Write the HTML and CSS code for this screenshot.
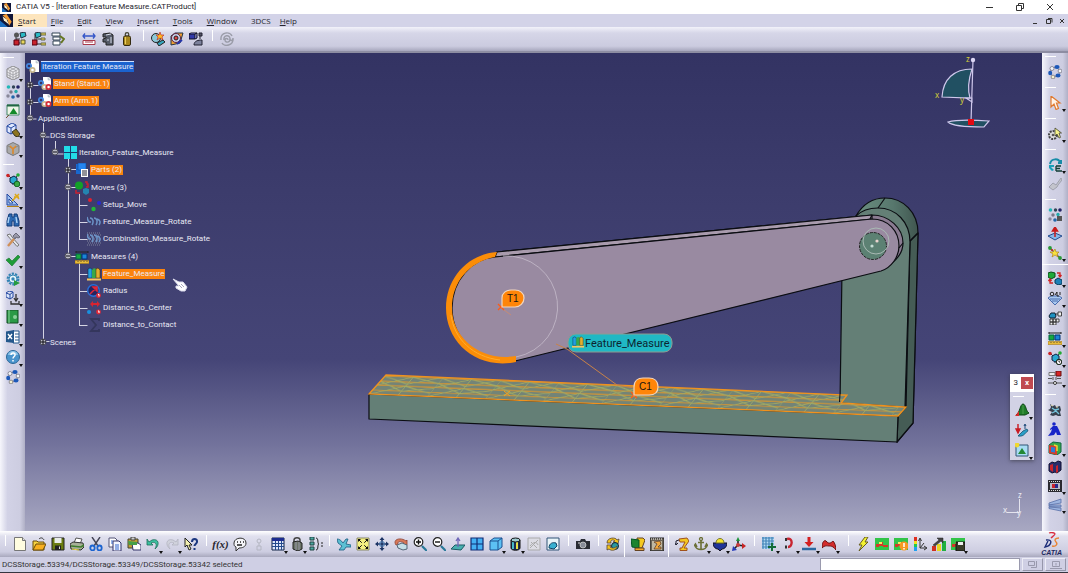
FILE: index.html
```html
<!DOCTYPE html>
<html lang="en">
<head>
<meta charset="utf-8">
<title>CATIA V5 - [Iteration Feature Measure.CATProduct]</title>
<link rel="stylesheet" href="styles.css">
</head>
<body>
<svg class="defs" aria-hidden="true">
<symbol id="app" viewBox="0 0 10 10"><rect width="10" height="10" fill="#10163a"/><path d="M0 10V5l6 5z" fill="#1c6fc0"/><path d="M2 1L5 0L9 6L7 9L6 5z" fill="#f39a32"/><path d="M2 2l3 2 2 4-4-3z" fill="#fff3c8"/></symbol>
<symbol id="cubes" viewBox="0 0 14 14"><path d="M3 4v7h4M3 7h4" fill="none" stroke="#333"/><path d="M7 1l5-1 1 4-5 2z" fill="#2bb9c4" stroke="#234"/><path d="M1 8h5v5H1z" fill="#c8232c" stroke="#501"/><path d="M8 8h4v4H8z" fill="#e8d65a" stroke="#553"/><circle cx="3.500" cy="3" r="2.500" fill="#555"/></symbol>
<symbol id="cubes2" viewBox="0 0 14 14"><path d="M3 2v10h6M4 7h5" fill="none" stroke="#333"/><path d="M3 1l5-1 1 4-5 2z" fill="#2bb9c4" stroke="#234"/><path d="M0 8h5v5H0z" fill="#c8232c" stroke="#501"/><path d="M9 1h5v2H9zM9 6h4v2H9zM9 11h5v2H9z" fill="#f0dc50" stroke="#664"/></symbol>
<symbol id="list" viewBox="0 0 14 14"><path d="M1 1h8v3H1zM2 5h7v3H2zM2 9h7v4H2z" fill="#fff" stroke="#345"/><path d="M9 4l4 3-3 4" fill="none" stroke="#667722" stroke-width="2"/></symbol>
<symbol id="ruler" viewBox="0 0 14 14"><path d="M1 4h12M3 1.500L1 4l2 2.500M11 1.500L13 4l-2 2.500" fill="none" stroke="#3355c8" stroke-width="1.300"/><path d="M1 8.500h12v4H1z" fill="#fff" stroke="#a83a4a"/><path d="M4 9v2M6 9v2M8 9v2M10 9v2" stroke="#a83a4a"/></symbol>
<symbol id="caliper" viewBox="0 0 14 14"><path d="M2 2l7-1 3 2v10l-7 0v-3H2l0-3 3-1V5L2 5z" fill="#555b68" stroke="#222"/><path d="M5 3l5-1M10 5v6M6 8h2" stroke="#d8dce8"/></symbol>
<symbol id="weight" viewBox="0 0 14 14"><circle cx="7" cy="2.500" r="1.800" fill="none" stroke="#443" stroke-width="1.200"/><rect x="3.500" y="4" width="7" height="9.500" rx="1.500" fill="#a8861c" stroke="#332a10"/><path d="M5.500 5v7" stroke="#e8cc60"/></symbol>
<symbol id="globe-star" viewBox="0 0 14 14"><circle cx="5" cy="6" r="4.500" fill="#8cc8d8" stroke="#222"/><path d="M9 0l1 3 3 0-2 2 1 3-3-2-3 2 1-3-2-2h3z" fill="#ffb81e" stroke="#b33" stroke-width=".7"/><path d="M6 11l6-3 2 2-6 4z" fill="#38a8c0" stroke="#222"/></symbol>
<symbol id="torus" viewBox="0 0 14 14"><path d="M1 13V4l4-3h8l-3 10z" fill="#f0a030" stroke="#234"/><circle cx="6" cy="6" r="4.500" fill="#c8d0e8" stroke="#602040"/><circle cx="6" cy="6" r="2" fill="#d44" stroke="#222"/><path d="M7 12l5-4" stroke="#23a" stroke-width="2"/></symbol>
<symbol id="boxes" viewBox="0 0 14 14"><path d="M0 2h6v5H0z" fill="#3038a8" stroke="#112"/><path d="M0 2l2-1h6l-2 1M6 7l2-1V1" fill="#7078e0" stroke="#112"/><path d="M11 4v3M8 9h2M10 1h3v3h-3z" stroke="#223" fill="#556"/><path d="M5 13c0-4 4-5 8-5v5z" fill="#7d829c" stroke="#223"/></symbol>
<symbol id="swirl" viewBox="0 0 14 14"><path d="M1 8C0 0 10-1 12 4M13 6c1 8-9 9-11 5M4 8c-1-5 6-6 6-1 0 4-5 4-5 1 0-2 3-2 3 0M10 7c1 3 3 1 3-1" fill="none" stroke="#9a9ca8" stroke-width="1.400"/></symbol>
<symbol id="mesh-cube" viewBox="0 0 14 14"><path d="M1 3l6-3 6 3v8l-6 3-6-3z" fill="#ececf0" stroke="#888"/><path d="M1 3l6 3 6-3M7 6v8M1 6l6 3 6-3M1 8.500l6 3 6-3M4 4.500v8M10 4.500v8M4 1.500l6 3M10 1.500l-6 3" fill="none" stroke="#9a9aa0" stroke-width=".8"/></symbol>
<symbol id="dots" viewBox="0 0 14 14"><circle cx="2.500" cy="2" r="1.800" fill="#22b8b8"/><circle cx="7.500" cy="2" r="1.700" fill="#345"/><circle cx="12" cy="2" r="1.800" fill="#226"/><circle cx="5" cy="7" r="1.700" fill="#778"/><circle cx="10" cy="6.500" r="1.700" fill="#2aa"/><circle cx="2" cy="11" r="1.700" fill="#889"/><circle cx="7" cy="12" r="1.800" fill="#26a"/><circle cx="12" cy="11" r="1.800" fill="#447"/></symbol>
<symbol id="dots-sq" viewBox="0 0 14 14"><use href="#dots"/><path d="M9 8h5v5H9z" fill="#555"/></symbol>
<symbol id="tri-win" viewBox="0 0 14 14"><path d="M1 1h12v10H1z" fill="#eef4e8" stroke="#486"/><path d="M1 1.500h12" stroke="#264" stroke-width="2"/><path d="M3.500 10L7.500 4l4 6z" fill="#128a28"/><path d="M0 14l3-3" stroke="#753"/></symbol>
<symbol id="cube-tool" viewBox="0 0 14 14"><path d="M1 3l5-3 4 2v6l-5 3-4-2z" fill="#dfe8ff" stroke="#2448a0"/><path d="M1 3l4 2 5-3M5 5v6" fill="none" stroke="#2448a0"/><path d="M6 9l4-3 4 5-2 3-3-1z" fill="#8c7420" stroke="#332"/></symbol>
<symbol id="cube-grey" viewBox="0 0 14 14"><path d="M1 3.500l6-3 6 3v7l-6 3-6-3z" fill="#aaa" stroke="#777"/><path d="M1 3.500l6 3 6-3M7 6.500v7" fill="none" stroke="#888"/><path d="M7 12V7L4 4M7 7l3-3" stroke="#e48a28" stroke-width="1.500" fill="none"/></symbol>
<symbol id="molecule" viewBox="0 0 14 14"><path d="M2 2l5 5 5-5M7 7v5" stroke="#345" fill="none"/><circle cx="2" cy="2.500" r="1.800" fill="#c22"/><circle cx="12" cy="2" r="1.800" fill="#2a3"/><path d="M4 5l4-2 3 2v4L7 11 4 9z" fill="#2aa8d0" stroke="#124"/><circle cx="11" cy="11" r="2.800" fill="#3aaa46" stroke="#162"/></symbol>
<symbol id="mol-clock" viewBox="0 0 14 14"><use href="#molecule"/><circle cx="11" cy="11" r="2.600" fill="#fff" stroke="#222"/><path d="M11 9.500V11h1" stroke="#222" fill="none"/></symbol>
<symbol id="draft" viewBox="0 0 14 14"><path d="M1 1v11h11z" fill="#9cc0f0" stroke="#2448a0"/><path d="M3 6v4h4z" fill="#fff" stroke="#2448a0"/><path d="M6 8l7-7M9 1l4 5M8 4h5" stroke="#dca81c" stroke-width="1.500"/><path d="M1 13.500h12" stroke="#b08018"/></symbol>
<symbol id="binoc" viewBox="0 0 14 14"><path d="M3 1h3v3h2V1h3l2 7v5H8V8H6v5H1V8z" fill="#2c68b0" stroke="#123c78"/><path d="M3 4L2 10M10 4l1 6" stroke="#a8d0f4" stroke-width="1.500"/></symbol>
<symbol id="tools" viewBox="0 0 14 14"><path d="M1 2l3-1 2 3 7 8-2 1.500-7-8z" fill="#e4e6ec" stroke="#777"/><path d="M2 13l6-7" stroke="#d09058" stroke-width="2.400"/><path d="M7 3l3-3 4 4-2 1-2-1-1 2z" fill="#99a" stroke="#667"/></symbol>
<symbol id="check" viewBox="0 0 14 14"><path d="M0 7l3-2 3 3 6-6 2 2-8 9z" fill="#1f9c38" stroke="#157228" stroke-width=".6"/></symbol>
<symbol id="gear" viewBox="0 0 14 14"><circle cx="7" cy="7" r="5.300" fill="none" stroke="#3484b4" stroke-width="2.200" stroke-dasharray="2.200 1.100"/><circle cx="7" cy="7" r="4" fill="#e5f4fa" stroke="#3484b4"/><circle cx="7" cy="7" r="1.700" fill="#3484b4"/><path d="M8 8l6 3-6 3z" fill="#279c40"/></symbol>
<symbol id="cube-down" viewBox="0 0 14 14"><path d="M0 2l3-2 4 1v5L4 8 0 6zM0 2l4 1.500L7 1M4 3.500V8" fill="#dbe6fa" stroke="#2448a0"/><path d="M10 3v6M8 7l2 3 2-3M5 10v3h8v-3" fill="none" stroke="#333" stroke-width="1.300"/></symbol>
<symbol id="book" viewBox="0 0 14 14"><path d="M1 0h11v13H1z" fill="#2a9a46" stroke="#124c22"/><path d="M3 0v13" stroke="#8ad09a"/><circle cx="9" cy="7" r="2" fill="#8ad09a"/></symbol>
<symbol id="excel" viewBox="0 0 14 14"><path d="M7 1h6v12H7z" fill="#fff" stroke="#24588c"/><path d="M9 4h4M9 7h4M9 10h4" stroke="#24588c"/><path d="M0 1.500L8 0v13L0 12z" fill="#24588c"/><path d="M2 4l4 5M6 4L2 9" stroke="#fff" stroke-width="1.400"/></symbol>
<symbol id="help" viewBox="0 0 14 14"><circle cx="7" cy="7" r="6.500" fill="#4a94cc" stroke="#2c6898"/><path d="M2 5a5 4 0 0 1 10 0z" fill="#8cc4e8"/><path d="M5 5c0-3 4.500-2.500 4 0C9 6.500 7 6.500 7 8.500M7 10v1.500" fill="none" stroke="#fff" stroke-width="1.500"/></symbol>
<symbol id="ring" viewBox="0 0 14 14"><circle cx="7" cy="7" r="4.500" fill="none" stroke="#889"/><ellipse cx="9" cy="2" rx="2.600" ry="1.900" fill="#1c58b8"/><circle cx="4" cy="3.500" r="2" fill="#f4f6fa" stroke="#556" stroke-width=".6"/><ellipse cx="2.200" cy="8" rx="2" ry="2.300" fill="#1c58b8"/><circle cx="5" cy="12" r="1.900" fill="#f4f0d0" stroke="#556" stroke-width=".6"/><ellipse cx="10" cy="10.500" rx="2.500" ry="2" fill="#1c58b8"/><circle cx="12" cy="6" r="1.900" fill="#f4f6fa" stroke="#556" stroke-width=".6"/></symbol>
<symbol id="arrow" viewBox="0 0 14 14"><path d="M3 0v11l3-3 2 5.500 2.500-1L8.500 7H12z" fill="#fff4e8" stroke="#e07a30" stroke-width="1.200"/></symbol>
<symbol id="gear-arrow" viewBox="0 0 14 14"><circle cx="5" cy="8" r="4" fill="#ddd" stroke="#444" stroke-width="2" stroke-dasharray="2 1"/><circle cx="5" cy="8" r="1.300" fill="#555"/><path d="M7 1v8l2-2 2 4 1.500-.6L11 6h2.500z" fill="#f6f48a" stroke="#443" stroke-width=".8"/></symbol>
<symbol id="cycle" viewBox="0 0 14 14"><path d="M2 6c1-6 9-6 10-1M10 5h3V2" fill="none" stroke="#178ca8" stroke-width="2"/><path d="M1 7h5v2H3l3 3-2 1-3-3z" fill="#1aa0b8"/><path d="M8 8h5M8 10.500h4M8 13h6M8 8v5" stroke="#123c34" stroke-width="1.300"/></symbol>
<symbol id="brush" viewBox="0 0 14 14"><path d="M13 1L8 8 5 6 1 10l4 3 4-3 1-2 4-5z" fill="#c3c4cc" stroke="#9fa1ad"/></symbol>
<symbol id="plane-up" viewBox="0 0 14 14"><path d="M0 9l7-3 7 3-7 4z" fill="#88b8e8" stroke="#234c90"/><path d="M7 10V3M4.500 4L7 0l2.500 4z" stroke="#c81c1c" stroke-width="1.500" fill="#c81c1c"/></symbol>
<symbol id="spark-line" viewBox="0 0 14 14"><path d="M1 1l12 12" stroke="#654" stroke-width="1.200"/><path d="M7 3l1 3 3 0-2 2 1 3-3-2-3 2 1-3-3-2h3z" fill="#f8e040" stroke="#a87c10" stroke-width=".6"/><circle cx="2" cy="2" r="1.900" fill="#2a9a38"/><circle cx="12" cy="12" r="1.900" fill="#2a9a38"/><circle cx="4" cy="4" r="1" fill="#c22"/></symbol>
<symbol id="swap" viewBox="0 0 14 14"><path d="M0 2l3-1 4 1v4L3 8 0 6z" fill="#1fa838" stroke="#0a4c18"/><path d="M7 9l3-2 4 2v4l-4 1-3-2z" fill="#1c80b8" stroke="#083858"/><path d="M9 2h3v3M10.500 4L12 6l1.500-2M5 12H2V9M.5 10L2 8l1.500 2" fill="none" stroke="#d02424" stroke-width="1.300"/></symbol>
<symbol id="balloon" viewBox="0 0 14 14"><path d="M0 7l3-2h8l3 2-7 7z" fill="#a8c8f0" stroke="#4a6cae"/><path d="M2 8h10M4 10h6" stroke="#4a6cae"/><circle cx="4" cy="3" r="1.800" fill="none" stroke="#222"/><path d="M7 4l2-3v4h2M12 1v3" fill="none" stroke="#222"/></symbol>
<symbol id="network" viewBox="0 0 14 14"><path d="M1 5l2-3h4l1 3-1 2H2z" fill="#1d90c0" stroke="#123"/><path d="M10 1h3.500v4H10zM2 8h3v3H2zM5 8h3v3H5zM8 8h3v3H8zM2 11h3v3H2zM5 11h3v3H5z" fill="#eee" stroke="#333" stroke-width=".9"/><path d="M8 3h2" stroke="#333"/></symbol>
<symbol id="measure" viewBox="0 0 14 14"><path d="M1 1v2M13 1v2M1 2h12" fill="none" stroke="#222"/><path d="M1 4h5v5H1z" fill="#18a840" stroke="#064"/><path d="M7 4h5v5H7z" fill="#1c84d8" stroke="#037"/><path d="M0 10.500h14v3H0z" fill="#e8bc38" stroke="#a87a18" stroke-width=".6"/><path d="M3 11v1M6 11v1M9 11v1M12 11v1" stroke="#653"/></symbol>
<symbol id="toler" viewBox="0 0 14 14"><path d="M1 1.500h6v3H1z" fill="#eee" stroke="#777"/><path d="M8 0h5v5H8z" fill="#d82424" stroke="#611"/><path d="M0 7.500h4M9 7.500h4M5 6v3M8 6v3M0 12h14" fill="none" stroke="#555"/><circle cx="7" cy="12" r="1.500" fill="#fff" stroke="#333"/></symbol>
<symbol id="robots" viewBox="0 0 14 14"><path d="M2 1l3 2 2-1 1 2 4-1 1 4-1 2 1 4-3 0-2-1-3 1-3-1 2-3-4-2 2-1 1-2z" fill="#39424f"/><path d="M4 5l3 2 4-1M4 10l4-2 3 3" stroke="#75c4dc" fill="none" stroke-width="1.300"/><path d="M3 2l2 1M8 4l2 0" stroke="#e8e0b0"/></symbol>
<symbol id="person" viewBox="0 0 14 14"><circle cx="6" cy="2" r="1.800" fill="#1724c8"/><path d="M5 4l4 0 2 4 2 5h-4L8 10l-2 3-6 1 3-4 1-3-2 1V7z" fill="#1724c8"/></symbol>
<symbol id="rgb-cube" viewBox="0 0 14 14"><path d="M1 4l4-3 8 1v9l-4 3-8-2z" fill="#36a848" stroke="#164"/><path d="M1 4l8 1v9l-8-2z" fill="#d83c2c"/><path d="M3 6l4 .5v5L3 11z" fill="#2c7cd8"/><path d="M6 4l3 1v5" stroke="#f0d838" fill="none" stroke-width="1.500"/></symbol>
<symbol id="blk-cube" viewBox="0 0 14 14"><path d="M1 4l3-2 3 1 3-2 3 1v8l-4 3-2-1-3 1-3-2z" fill="#282c6c" stroke="#113"/><path d="M2 5l3-1v8l-3-2zM8 6l2-1v7l-2 1z" fill="#c8242c"/></symbol>
<symbol id="film" viewBox="0 0 14 14"><path d="M0 1h14v12H0z" fill="#2a2a30"/><path d="M1 2.500h12M1 11.500h12" stroke="#ddd" stroke-dasharray="1 1"/><path d="M2 4h10v6H2z" fill="#b9bcc8"/><path d="M4 5h3v4H4z" fill="#c8242c"/><path d="M7 5h3v4H7z" fill="#282c8c"/></symbol>
<symbol id="sheets" viewBox="0 0 14 14"><path d="M1 5l12-4v4L1 7zM1 7h12v2L1 8.500zM1 9l12 1v3L1 10.500z" fill="#9cb4e0" stroke="#5870a8" stroke-width=".8"/></symbol>
<symbol id="bell" viewBox="0 0 14 14"><path d="M1 12C5 10 5 1 8 1s3 8 6 9l-4 2z" fill="#1f7c28" stroke="#0c4414"/><path d="M0 13l4-5v5z" fill="#d42c2c"/><path d="M8 2v9" stroke="#4c9c4c"/></symbol>
<symbol id="redarrow" viewBox="0 0 14 14"><path d="M3 1v6M1 6l2 4 2-4z" stroke="#c81c24" stroke-width="1.400" fill="#c81c24"/><path d="M3 13c7 1 7-4 10-5l-1-2-4 2-3 3z" fill="#2ba0c8" stroke="#145070" stroke-width=".8"/><path d="M10 6V2M9 3l1-2 1 2" stroke="#1c4878" fill="none"/></symbol>
<symbol id="pic" viewBox="0 0 14 14"><path d="M1 2h12v11H1z" fill="#a8dcf4" stroke="#357"/><path d="M3 11l4-6 4 6z" fill="#238834"/><circle cx="2" cy="2" r="2.400" fill="#f0d830"/></symbol>
<symbol id="new" viewBox="0 0 14 14"><path d="M1.500.5h8l3 3v10h-11z" fill="#fffde0" stroke="#777"/><path d="M9.500.5v3h3" fill="#ddd" stroke="#777"/></symbol>
<symbol id="open" viewBox="0 0 14 14"><path d="M1 4h4l1 1h6v8H1z" fill="#f8d444" stroke="#6a4c08"/><path d="M1 13l3-6h10l-3 6z" fill="#f8b020" stroke="#6a4c08"/><path d="M7 2c2-2 4-1 5 1" fill="none" stroke="#333"/></symbol>
<symbol id="save" viewBox="0 0 14 14"><path d="M1 1h12v12H1z" fill="#6a7c10" stroke="#222"/><path d="M3.500 1h7v5h-7z" fill="#e8ece8"/><path d="M4 8.500h6V13H4z" fill="#222"/><path d="M8 9.500h1V12H8z" fill="#ddd"/></symbol>
<symbol id="print" viewBox="0 0 14 14"><path d="M4 6l2-5 6 1-2 5z" fill="#fff" stroke="#555"/><path d="M0 7l3-2 10 1 1 4-3 3-10-1z" fill="#a8b098" stroke="#333"/><path d="M1 9l10 1 3-2" fill="none" stroke="#3c7c2c" stroke-width="1.600"/><path d="M2 12l7 1" stroke="#e8d840"/></symbol>
<symbol id="cut" viewBox="0 0 14 14"><path d="M3 0l6 9M11 0L5 9" stroke="#445" stroke-width="1.400"/><ellipse cx="3.500" cy="11" rx="2.200" ry="2.500" fill="none" stroke="#1c64d0" stroke-width="1.800"/><ellipse cx="10.500" cy="11" rx="2.200" ry="2.500" fill="none" stroke="#1c64d0" stroke-width="1.800"/></symbol>
<symbol id="copy" viewBox="0 0 14 14"><path d="M1 1h6l2 2v7H1z" fill="#fff" stroke="#557"/><path d="M5 4h6l2 2v8H5z" fill="#f4f6ff" stroke="#336"/><path d="M3 4h2M3 6h2M7 8h4M7 10h4M7 12h4" stroke="#36c"/></symbol>
<symbol id="paste" viewBox="0 0 14 14"><path d="M1 2h10v9H1z" fill="#c09c34" stroke="#443"/><path d="M4 0h4v3H4z" fill="#ccc" stroke="#444"/><path d="M5 6h6l3 2v5H6z" fill="#fff" stroke="#336"/><path d="M1 4l9 1v3H2z" fill="#48a048"/></symbol>
<symbol id="undo" viewBox="0 0 14 14"><path d="M1 2v6h6L5 6c4-2 7 1 4 6 5-4 4-11-3-9L3 5z" fill="#3cc0a0" stroke="#1c6c58" stroke-width=".8"/></symbol>
<symbol id="redo" viewBox="0 0 14 14"><path d="M13 2v6H7l2-2c-4-2-7 1-4 6C0 8 1 1 8 3l3 2z" fill="#d0d2dc" stroke="#b2b4c0" stroke-width=".8"/></symbol>
<symbol id="whatsthis" viewBox="0 0 14 14"><path d="M1 1v9l2-2 2 5 2-1-2-4h3z" fill="#f4f0b0" stroke="#222"/><path d="M8 5c0-4 5.500-4 5 0-.5 2-2.500 2-2.500 4M10.500 11v2" fill="none" stroke="#1c3880" stroke-width="2"/></symbol>
<symbol id="bubble" viewBox="0 0 14 14"><path d="M1 6c0-6 12-7 12 0 0 4-4 5-7 5l-3 3v-4C1 9 1 8 1 6z" fill="#f4f4f8" stroke="#333"/><path d="M4 5h1M7 5h1M10 5h1M4 8h5" stroke="#222" stroke-width="1.500"/></symbol>
<symbol id="ghost" viewBox="0 0 14 14"><circle cx="7" cy="4" r="2" fill="none" stroke="#b4b6c2"/><path d="M7 6v3M5 9h4v4H5z" fill="none" stroke="#b4b6c2"/></symbol>
<symbol id="table" viewBox="0 0 14 14"><path d="M1 1h12v12H1z" fill="#dfe6fb" stroke="#124"/><path d="M1 2.500h12" stroke="#1c2c90" stroke-width="3"/><path d="M1 6.500h12M1 9.500h12M4.500 4v9M7.500 4v9M10.500 4v9" stroke="#234a8c"/></symbol>
<symbol id="lock" viewBox="0 0 14 14"><path d="M4 6V3c0-3 6-3 6 0v3" fill="none" stroke="#444" stroke-width="1.500"/><path d="M3 5l5-1 4 2v6l-4 2-5-2z" fill="#6c7468" stroke="#222"/><path d="M6 5v8M9 5v8" stroke="#99a"/></symbol>
<symbol id="tree" viewBox="0 0 14 14"><path d="M1 0h4v3H1zM1 5h4v3H1zM1 10h4v3H1z" fill="#4aa8a0" stroke="#244"/><path d="M7 1c3 0 1 6 3 6-2 0 0 6-3 6M12 6h2M12 9h2" fill="none" stroke="#222"/></symbol>
<symbol id="fly" viewBox="0 0 14 14"><path d="M0 2c2 0 4 1 6 4l3-4 2 0-2 5 5 1 0 2-5 0-2 3-5 0 3-4-4-3z" fill="#5cc0d4" stroke="#185c80" stroke-width=".8"/></symbol>
<symbol id="fit" viewBox="0 0 14 14"><path d="M1 1h12v12H1z" fill="#f4f080" stroke="#886"/><path d="M3 3l8 8M11 3l-8 8" stroke="#111"/><path d="M2 5V2h3zM9 2h3v3zM2 9v3h3zM9 12h3V9z" fill="#111"/><path d="M5.500 5.500h3v3h-3z" fill="#f4f080"/></symbol>
<symbol id="pan" viewBox="0 0 14 14"><path d="M7 2v10M2 7h10" stroke="#1c3464" stroke-width="1.600"/><path d="M4.500 3L7 0l2.500 3zM4.500 11L7 14l2.500-3zM3 4.500L0 7l3 2.500zM11 4.500L14 7l-3 2.500z" fill="#1c3464"/><path d="M5 5h4v4H5z" fill="none" stroke="#4478b0"/></symbol>
<symbol id="rotate" viewBox="0 0 14 14"><path d="M2 8C-2 2 7 0 12 4l1-1v5H8l2-2C7 4 3 4 4 7z" fill="#d87858" stroke="#8c3c2c" stroke-width=".8"/><path d="M3 8l5-2 5 2v4l-4 1-5-2z" fill="#c4dfe8" stroke="#567"/></symbol>
<symbol id="zin" viewBox="0 0 14 14"><path d="M9 9l5 5" stroke="#287898" stroke-width="2.200"/><circle cx="5.500" cy="5" r="4.300" fill="#fff" stroke="#222" stroke-width="1.200"/><path d="M3 5h5M5.500 2.500v5" stroke="#111" stroke-width="1.400"/></symbol>
<symbol id="zout" viewBox="0 0 14 14"><path d="M9 9l5 5" stroke="#287898" stroke-width="2.200"/><circle cx="5.500" cy="5" r="4.300" fill="#fff" stroke="#222" stroke-width="1.200"/><path d="M3 5h5" stroke="#111" stroke-width="1.400"/></symbol>
<symbol id="normal" viewBox="0 0 14 14"><path d="M0 12l4-4h10l-4 5z" fill="#48b0b0" stroke="#1c5c64"/><path d="M7 10V1M5 4l2-3 2 3" fill="none" stroke="#7068b8" stroke-width="1.300"/></symbol>
<symbol id="views" viewBox="0 0 14 14"><path d="M1 1h12v12H1z" fill="#44b0f4" stroke="#102c74" stroke-width="1.200"/><path d="M7 1v12M1 7h12" stroke="#102c74" stroke-width="1.200"/></symbol>
<symbol id="iso" viewBox="0 0 14 14"><path d="M1 4l4-3h8v9l-4 3H1z" fill="#5cc0f4" stroke="#1c5090"/><path d="M1 4h8v9M9 4l4-3" fill="none" stroke="#1c5090"/></symbol>
<symbol id="cyl" viewBox="0 0 14 14"><path d="M3 3v8c0 3 9 3 9 0V3" fill="#1c2c50" stroke="#111"/><path d="M4 4v8h2V4z" fill="#48b8c8"/><path d="M8 4v8h2V4z" fill="#e8e048"/><ellipse cx="7.500" cy="3" rx="4.500" ry="2" fill="#9ccad0" stroke="#111"/></symbol>
<symbol id="hide" viewBox="0 0 14 14"><path d="M1 1h12v12H1z" fill="#dcdce4" stroke="#aaa"/><path d="M3 9c4-5 7-4 8-1M3 11l8-8M4 5l6 6" fill="none" stroke="#aaa"/></symbol>
<symbol id="swapvis" viewBox="0 0 14 14"><path d="M1 1h12v12H1z" fill="#e8f4f8" stroke="#357"/><path d="M3 11c0-5 4-6 7-5l1 3-3 3z" fill="#38b0d0" stroke="#146"/></symbol>
<symbol id="camera" viewBox="0 0 14 14"><path d="M0 4h4l1-2h4l1 2h4v8H0z" fill="#2a2c34"/><circle cx="7" cy="8" r="3" fill="#888c98" stroke="#ddd" stroke-width=".7"/><path d="M2 6h2" stroke="#ddd"/></symbol>
<symbol id="cycle2" viewBox="0 0 14 14"><path d="M1 6c0-6 9-6 10-3l2-1-1 5-5-2 2-1C7 2 4 3 5 6z" fill="#f4c41c" stroke="#543" stroke-width=".8"/><circle cx="9" cy="9" r="3.500" fill="#2a98a0" stroke="#123"/><path d="M1 8l4 0-1 2c3 2 5 1 7-1 0 5-6 5-8 3l-2 1z" fill="#f4c41c" stroke="#543" stroke-width=".8"/></symbol>
<symbol id="robot" viewBox="0 0 14 14"><path d="M6 1h6l2 2-3 8H7z" fill="#f4c820" stroke="#642"/><path d="M0 2l8 1v8l-7-1z" fill="#1c8430" stroke="#052"/><path d="M4 11h9v2.500H4z" fill="#f4a828" stroke="#642"/></symbol>
<symbol id="robotfilm" viewBox="0 0 14 14"><path d="M0 1h14v13H0z" fill="#6b6458" stroke="#222"/><path d="M1 2h12" stroke="#fff" stroke-dasharray="1 1"/><path d="M2 4h10v9H2z" fill="#c0b8a0"/><path d="M4 5l6-1 1 3-3 3h3v2H4l3-5z" fill="#f0a83c" stroke="#532" stroke-width=".7"/></symbol>
<symbol id="arm" viewBox="0 0 14 14"><path d="M4 2l8-1 2 3-5 7 3 0 0 2.500H5V11l2 0 3-6-5 0z" fill="#f4c820" stroke="#a0521c"/><path d="M1 4v4M0 6l1 2 2-2M1 4l3-1" fill="none" stroke="#223"/></symbol>
<symbol id="anchor" viewBox="0 0 14 14"><circle cx="7" cy="2" r="1.500" fill="none" stroke="#6c7038" stroke-width="1.300"/><path d="M7 3.500V12M4 5.500h6M1 8c0 6 12 6 12 0M0 9l1.500-2L3 10M14 9l-1.500-2L11 10" fill="none" stroke="#6c7038" stroke-width="1.600"/></symbol>
<symbol id="pot" viewBox="0 0 14 14"><path d="M0 6h14c0 3-2 6-5 6l-2 2-2-2C2 12 0 9 0 6z" fill="#203498" stroke="#112"/><path d="M3 6c0-6 8-6 8 0z" fill="#f4e428" stroke="#773"/></symbol>
<symbol id="axes" viewBox="0 0 14 14"><path d="M6 8V2M6 8l6 1M6 8l-4 4" stroke="#222" stroke-width="1.600"/><path d="M4 4l2-4 2 4z" fill="#1c9438"/><path d="M10 6l4 3-4 3z" fill="#c82424"/><path d="M0 14l1-5 4 4z" fill="#2438b8"/><circle cx="6" cy="8" r="2" fill="#c83c3c"/></symbol>
<symbol id="grid" viewBox="0 0 14 14"><path d="M0 0h12v12H0z" fill="#b4dcf4"/><path d="M1 0v12M4 0v12M7 0v12M10 0v12M0 1h12M0 4h12M0 7h12M0 10h12" stroke="#4484b8" stroke-width="1.200"/><path d="M10 6v8M6 10h8" stroke="#146c38" stroke-width="2"/></symbol>
<symbol id="magnet" viewBox="0 0 14 14"><path d="M5 2c6-2 6 8 1 8" fill="none" stroke="#c82430" stroke-width="2.400"/><path d="M4 1v3M4 8.500v3" stroke="#333" stroke-width="2"/></symbol>
<symbol id="down" viewBox="0 0 14 14"><path d="M7 0v6" stroke="#d42020" stroke-width="3"/><path d="M2.500 5h9L7 10z" fill="#d42020"/><path d="M0 12h14" stroke="#2c68a0" stroke-width="2.500"/></symbol>
<symbol id="wave" viewBox="0 0 14 14"><path d="M0 11c0-7 3-9 5-6 2 2 4 1 6-1 2 2 3 6 3 9-3-4-5-4-7-4s-4-1-7 2z" fill="#d42c2c" stroke="#6c1010"/></symbol>
<symbol id="bolt" viewBox="0 0 14 14"><path d="M9 0h3L9 5h3L3 14l3-6H3z" fill="#f4f430" stroke="#665c20"/></symbol>
<symbol id="map" viewBox="0 0 14 14"><path d="M0 1h14v12H0z" fill="#32c448"/><path d="M1 7h3V5h4v3h5v2H8V9H4v1H1z" fill="#d43828"/><path d="M4 5h3v2H4z" fill="#f4e860"/></symbol>
<symbol id="mapwarn" viewBox="0 0 14 14"><use href="#map"/><circle cx="10" cy="9" r="4.500" fill="#f89820"/><path d="M10 6v4M10 11v1.500" stroke="#fff" stroke-width="1.500"/></symbol>
<symbol id="scale" viewBox="0 0 14 14"><path d="M1 0h3v4H1z" fill="#e03020"/><path d="M1 4h3v3H1z" fill="#f4e020"/><path d="M1 7h3v3H1z" fill="#20c850"/><path d="M1 10h3v4H1z" fill="#20a0f0"/><path d="M7 2v9h6M5.500 4L7 1l1.500 3M11 9l3 2-3 2M7 11l4-5" fill="none" stroke="#333"/></symbol>
<symbol id="chart" viewBox="0 0 14 14"><path d="M0 9h4v5H0z" fill="#d03020"/><path d="M5 7h4v7H5z" fill="#e8d820"/><path d="M10 4h4v10h-4z" fill="#20b040"/><path d="M1 8l6-5-2-2h6v5L9 4 3 9z" fill="#444" stroke="#222" stroke-width=".5"/></symbol>
<symbol id="mapsave" viewBox="0 0 14 14"><use href="#map"/><path d="M5 5h9v9H5z" fill="#383c28" stroke="#111"/><path d="M7 5h5v3H7z" fill="#eee"/></symbol>
<symbol id="product" viewBox="0 0 14 14"><path d="M5 0h6l2 2v10H5z" fill="#fff"/><path d="M10 0v3h3" fill="#cdd" stroke="#aab" stroke-width=".5"/><circle cx="3" cy="6" r="2.200" fill="none" stroke="#4488e0" stroke-width="1.700"/><circle cx="6.500" cy="10" r="2.200" fill="none" stroke="#c8b890" stroke-width="1.700"/></symbol>
<symbol id="part" viewBox="0 0 14 14"><use href="#product"/><circle cx="10.500" cy="10" r="2.200" fill="none" stroke="#d42c38" stroke-width="1.700"/></symbol>
<symbol id="model" viewBox="0 0 14 14"><path d="M1 0h13v13H1z" fill="#22dce8"/><path d="M7.500 0v13M1 6.500h13" stroke="#183c70"/></symbol>
<symbol id="parts" viewBox="0 0 14 14"><path d="M1 1h8v10H1z" fill="#1868d0"/><path d="M3 0h8v7H3z" fill="#2484f0" stroke="#124c98" stroke-width=".6"/><path d="M6 6h7v8H6z" fill="#fff"/><path d="M7 8h5M7 10h5M7 12h5" stroke="#223"/></symbol>
<symbol id="moves" viewBox="0 0 14 14"><circle cx="4" cy="4.500" r="4" fill="#12a028"/><path d="M10 1h2v2h1v3h-2M1 9v3h4" stroke="#c82030" fill="none" stroke-width="1.500"/><path d="M8 8l3-1 3 1v4l-3 2-3-2z" fill="#2484b0"/></symbol>
<symbol id="setup" viewBox="0 0 14 14"><circle cx="3" cy="2" r="2" fill="#e02030"/><circle cx="12" cy="5" r="2" fill="#2828d8"/><circle cx="6.500" cy="11" r="2.200" fill="#20b838"/></symbol>
<symbol id="coil" viewBox="0 0 14 14"><path d="M0 2c1 5 2 5 4 5M3 3c3 0 4 4 2 7M7 3c3 0 4 4 2 7M10 4c3 1 4 3 2 6" fill="none" stroke="#6c94c8" stroke-width="1.500"/></symbol>
<symbol id="coil2" viewBox="0 0 14 14"><path d="M0 1h14M1 3h13M0 5h14M1 7h13M0 9h14M1 11h13M0 13h14" fill="none" stroke="#80849c" stroke-dasharray="1 1"/><use href="#coil"/></symbol>
<symbol id="feat" viewBox="0 0 14 14"><path d="M1 2l2-1 2 1v9H1z" fill="#24a0e0" stroke="#024" stroke-width=".5"/><path d="M5 3l2-2 2 1v9H5z" fill="#38a848"/><path d="M9 2l2-1 2 2v8H9z" fill="#e0b030" stroke="#420" stroke-width=".5"/><path d="M0 11.500h14v2H0z" fill="#f8c860"/></symbol>
<symbol id="radius" viewBox="0 0 14 14"><circle cx="6.500" cy="6.500" r="5.800" fill="#242460" stroke="#2870d8" stroke-width="1.400"/><path d="M3 10l6-6M6 3h4v4z" stroke="#e02838" fill="#e02838" stroke-width="1.500"/><circle cx="11.500" cy="11.500" r="2.400" fill="#e02838"/><path d="M11 10.500h1v2" stroke="#fff" fill="none"/></symbol>
<symbol id="dist" viewBox="0 0 14 14"><path d="M4 3h8" stroke="#d82430" stroke-width="2"/><path d="M3 3l3-3v6zM13 3l-3-3v6z" fill="#d82430"/><circle cx="2" cy="11" r="2" fill="#1890e0"/><circle cx="11.500" cy="11" r="2.400" fill="#e02838"/><path d="M11 10h1v2" stroke="#fff" fill="none"/></symbol>
<symbol id="sigma" viewBox="0 0 14 14"><path d="M12 3V1H4l5 6-5 6h8v-2" fill="none" stroke="#34365c" stroke-width="1.800"/></symbol>
</svg>

<header class="titlebar">
  <svg class="appicon"><use href="#app"/></svg>
  <h1 class="title">CATIA V5 - [Iteration Feature Measure.CATProduct]</h1>
  <div class="winctl">
    <button aria-label="Minimize"><svg viewBox="0 0 8 8"><path d="M0 4.500h7"/></svg></button>
    <button aria-label="Restore"><svg viewBox="0 0 8 8"><path d="M.5 2.500h5v5h-5zM2.500 2V.5h5v5H6"/></svg></button>
    <button aria-label="Close"><svg viewBox="0 0 8 8"><path d="M1 1l6 6M7 1L1 7"/></svg></button>
  </div>
</header>

<nav class="menubar" aria-label="Main menu">
  <svg class="menuicon"><use href="#app"/></svg>
  <button class="menu start"><u>S</u>tart</button>
  <button class="menu"><u>F</u>ile</button>
  <button class="menu"><u>E</u>dit</button>
  <button class="menu"><u>V</u>iew</button>
  <button class="menu"><u>I</u>nsert</button>
  <button class="menu"><u>T</u>ools</button>
  <button class="menu"><u>W</u>indow</button>
  <button class="menu tight">3DCS</button>
  <button class="menu"><u>H</u>elp</button>
  <div class="mdi">
    <button aria-label="Minimize document"><svg viewBox="0 0 8 8"><path d="M1 6.500h4"/></svg></button>
    <button aria-label="Restore document"><svg viewBox="0 0 8 8"><path d="M1.500 2.500h4v4h-4zM3 1.500h4v4"/></svg></button>
    <button aria-label="Close document"><svg viewBox="0 0 8 8"><path d="M2 2l4 4M6 2L2 6"/></svg></button>
  </div>
</nav>

<div class="bar top" role="toolbar" aria-label="Analysis">
  <div class="grp">
    <button aria-label="Component"><svg><use href="#cubes"/></svg></button>
    <button aria-label="Product structure"><svg><use href="#cubes2"/></svg></button>
    <button aria-label="Bill of material"><svg><use href="#list"/></svg></button>
  </div>
  <div class="grp">
    <button aria-label="Measure between"><svg><use href="#ruler"/></svg></button>
    <button aria-label="Measure item"><svg><use href="#caliper"/></svg></button>
    <button aria-label="Measure inertia"><svg><use href="#weight"/></svg></button>
  </div>
  <div class="grp">
    <button aria-label="Clash"><svg><use href="#globe-star"/></svg></button>
    <button aria-label="Sectioning"><svg><use href="#torus"/></svg></button>
    <button aria-label="Distance and band analysis"><svg><use href="#boxes"/></svg></button>
  </div>
  <div class="grp">
    <button aria-label="Update all"><svg><use href="#swirl"/></svg></button>
  </div>
</div>

<main class="work">
  <div class="side left" role="toolbar" aria-label="3DCS">
    <div class="vgrp">
      <button class="drop" aria-label="Mesh"><svg><use href="#mesh-cube"/></svg></button>
      <button aria-label="Points"><svg><use href="#dots"/></svg></button>
      <button aria-label="Display"><svg><use href="#tri-win"/></svg></button>
      <button class="drop" aria-label="Edit part"><svg><use href="#cube-tool"/></svg></button>
      <button class="drop" aria-label="Part colour"><svg><use href="#cube-grey"/></svg></button>
    </div>
    <div class="vgrp tall">
      <button class="drop" aria-label="Model"><svg><use href="#molecule"/></svg></button>
      <button class="drop" aria-label="Drafting"><svg><use href="#draft"/></svg></button>
      <button class="drop" aria-label="Find"><svg><use href="#binoc"/></svg></button>
      <button aria-label="Preferences"><svg><use href="#tools"/></svg></button>
      <button class="drop short" aria-label="Validate"><svg><use href="#check"/></svg></button>
      <button class="short" aria-label="Run analysis"><svg><use href="#gear"/></svg></button>
      <button class="drop short" aria-label="Load"><svg><use href="#cube-down"/></svg></button>
      <button class="drop" aria-label="Report"><svg><use href="#book"/></svg></button>
      <button class="drop" aria-label="Spreadsheet"><svg><use href="#excel"/></svg></button>
      <button class="drop" aria-label="Help"><svg><use href="#help"/></svg></button>
      <button class="short" aria-label="About 3DCS"><svg><use href="#ring"/></svg></button>
    </div>
  </div>

  <section class="view" aria-label="3D view">
    <svg class="scene" viewBox="25 53 1017 478" preserveAspectRatio="xMidYMid meet">
      <defs>
        <pattern id="mesh" width="58" height="22" patternUnits="userSpaceOnUse" patternTransform="translate(369 394) matrix(1 .0415 -.85 1 0 0)">
          <path d="M0 4h58M0 9h58M0 13h58M0 18h58" fill="none" stroke="#e0972c" stroke-width=".8"/>
          <path d="M0 0v22M29 0v22M0 22l29-9 29 6M0 4l29 7 29-8M0 13l29-9 29 5M0 9l29 9 29-4" fill="none" stroke="#a3ab62" stroke-width=".8"/>
        </pattern>
        <linearGradient id="ring-shade"><stop offset="0" stop-color="#6b8f80"/><stop offset=".6" stop-color="#57776d"/><stop offset="1" stop-color="#40564f"/></linearGradient>
      </defs>
      <g stroke="#0b0d12" stroke-width="1.200" stroke-linejoin="round">
        <path d="M856 216C864 202 874 198 885 198c18 0 33 14 33 35L913 423 897 442l1-26 7-9 5-166z" fill="url(#ring-shade)"/>
        <path d="M898 416l8-9 4-166 8-8-5 190-16 19z" fill="#455c55"/>
        <path d="M842 270l14-54c6-6 14-8 22-8 18 0 32 14 32 34l-5 165-65-4z" fill="#647f76"/>
        <path d="M885 198l-7 10M910 241l8-8" fill="none"/>
        <path d="M369 394l529 22-1 26-528-23z" fill="#647f76"/>
      </g>
      <path d="M386 375l461 20-6 8 65 4-8 9-529-22z" fill="#738477"/>
      <path d="M386 375l461 20-6 8 65 4-8 9-529-22z" fill="url(#mesh)" stroke="#f0921e" stroke-width="1.300"/>
      <path d="M839.500 402l.5-8" stroke="#0b0d12"/>
      <g stroke="#0b0d12" stroke-width="1.200" stroke-linejoin="round">
        <path d="M497 252L872 215c17 0 31 13 31 28 0 9-6 17-15 23L860 230 495 257z" fill="#8a7b91"/>
        <path d="M497 252L872 215v4L495 257z" fill="#a99bad"/>
        <path d="M495 257L872 219c16 0 27 12 27 27 0 11-8 22-18 25L515 361c-30 3-63-18-63-53 0-28 20-49 43-51z" fill="#998aa1"/>
        <path d="M872 215l-2 4M903 243l-4 5" fill="none"/>
      </g>
      <path d="M497 252c-29 2-51 26-51 56 0 34 30 62 70 54v-6c-35 6-64-18-64-48 0-26 17-46 43-51z" fill="#fb8d08"/>
      <path d="M451 315c3 24 22 42 49 45" fill="none" stroke="#ffad2c"/>
      <path d="M503 256a51 51 0 0 1 13 101" fill="none" stroke="#bdb2c3"/>
      <circle cx="873" cy="246" r="13.500" fill="#5c8173" stroke="#222" stroke-dasharray="3 1"/>
      <circle cx="876" cy="241" r="13" fill="none" stroke="#a9bab4"/>
      <circle cx="877" cy="241" r="1.600" fill="#ead4cf"/><circle cx="872" cy="246" r="1.600" fill="#c6ded5"/>
      <path d="M500 307l11 8" stroke="#c58b75"/>
      <path d="M556 344l11 5 50 36 17 3" fill="none" stroke="#c98248"/>
      <path d="M498 304l6 6M504 304l-6 6M631 392l6 6M637 392l-6 6" stroke="#ff5b14" stroke-width="1.300"/>
      <path d="M504 391l6 5M510 391l-6 5" stroke="#f8a01c"/>
      <path d="M502 307v-9c0-5 4-8 9-8h4c5 0 9 3 9 8s-4 9-9 9z" fill="#ff8508" stroke="#f1d6bf" stroke-width="1.200"/>
      <text class="pin" x="507" y="302">T1</text>
      <path d="M634 395v-8c0-6 4-9 9-9h6c5 0 9 3 9 9s-4 8-9 8z" fill="#ff8508" stroke="#f1d6bf" stroke-width="1.200"/>
      <text class="pin" x="639" y="390">C1</text>
      <rect x="568" y="334" width="104" height="18" rx="8" fill="#20b8c4" stroke="#8d9b91"/>
      <svg x="572" y="336" width="12" height="12"><use href="#feat"/></svg>
      <text class="callout" x="585" y="347">Feature_Measure</text>
      <g fill="none" stroke="#cfc8ec" stroke-width="1.200">
        <path d="M972 69c-18 0-29 10-30 28l28 1c-3-10-1-20 2-29z" fill="#215062"/>
        <path d="M948 122c10-3 28-2 41-1l-5 6c-15 0-32-1-36-5z" fill="#215062"/>
        <path d="M973 60l-2 62M966 98h6v4z"/>
      </g>
      <circle cx="973" cy="60" r="2.200" fill="#dcd7f4"/><path d="M968 119h6v6h-6z" fill="#e20a14"/>
      <g class="axis"><text x="966" y="62">z</text><text x="935" y="98">x</text><text x="960" y="103">y</text></g>
      <path d="M1019.500 499v13.500H1007" fill="none" stroke="#e4e4ee"/>
      <g class="axis white"><text x="1018" y="498">z</text><text x="1003" y="513">x</text><text x="1017" y="516">y</text></g>
    </svg>

    <nav class="tree" aria-label="Specification tree">
      <svg class="lines" viewBox="0 0 190 295" aria-hidden="true">
        <path d="M5.500 16v50M5.500 32.500h8M5.500 49.500h8M5.500 66h6M18.500 70v217M18.500 84h6M30.500 88v13h8M43.500 105v98M43.500 116.500h8M43.500 134.500h8M43.500 203.500h8M54.500 141v46M54.500 152.500h8M54.500 169.500h8M54.500 186.500h8M54.500 210v63M54.500 221.500h8M54.500 238.500h8M54.500 255.500h8M54.500 272.500h8M18.500 288.500h6"/>
        <g class="knob"><circle cx="5" cy="32" r="3"/><circle cx="5" cy="49" r="3"/><circle cx="5" cy="65" r="3"/><circle cx="18" cy="82" r="3"/><circle cx="30" cy="99" r="3"/><circle cx="43" cy="117" r="3"/><circle cx="43" cy="134" r="3"/><circle cx="43" cy="203" r="3"/><circle cx="18" cy="289" r="3"/></g>
        <path class="mark" d="M2 32h6M5 29v6M2 49h6M5 46v6M3 65h4M16 82h4M28 99h4M40 117h6M43 114v6M41 134h4M41 203h4M15 289h6M18 286v6"/>
      </svg>
      <ul>
        <li><span class="row root"><svg><use href="#product"/></svg><b class="blue">Iteration Feature Measure</b></span>
          <ul>
            <li><span class="row l1"><svg><use href="#part"/></svg><b>Stand (Stand.1)</b></span></li>
            <li><span class="row l1"><svg><use href="#part"/></svg><b>Arm (Arm.1)</b></span></li>
            <li class="gap"><span class="row apps">Applications</span>
              <ul>
                <li><span class="row dcs">DCS Storage</span>
                  <ul>
                    <li><span class="row model"><svg><use href="#model"/></svg>Iteration_Feature_Measure</span>
                      <ul>
                        <li><span class="row l4"><svg><use href="#parts"/></svg><b>Parts (2)</b></span></li>
                        <li class="gap"><span class="row l4"><svg><use href="#moves"/></svg>Moves (3)</span>
                          <ul>
                            <li><span class="row l5"><svg><use href="#setup"/></svg>Setup_Move</span></li>
                            <li><span class="row l5"><svg><use href="#coil"/></svg>Feature_Measure_Rotate</span></li>
                            <li><span class="row l5"><svg><use href="#coil2"/></svg>Combination_Measure_Rotate</span></li>
                          </ul></li>
                        <li class="gap"><span class="row l4"><svg><use href="#measure"/></svg>Measures (4)</span>
                          <ul>
                            <li><span class="row l5"><svg><use href="#feat"/></svg><b>Feature_Measure</b></span></li>
                            <li><span class="row l5"><svg><use href="#radius"/></svg>Radius</span></li>
                            <li><span class="row l5"><svg><use href="#dist"/></svg>Distance_to_Center</span></li>
                            <li><span class="row l5"><svg><use href="#sigma"/></svg>Distance_to_Contact</span></li>
                          </ul></li>
                      </ul></li>
                  </ul></li>
                <li class="gap"><span class="row dcs">Scenes</span></li>
              </ul></li>
          </ul></li>
      </ul>
    </nav>

    <svg class="hand" viewBox="0 0 16 14" aria-hidden="true"><path d="M1 1l6 3 4 0 4 5-2 4-4 0-5-3 0-2 3 0z" fill="#fff" stroke="#dde"/><path d="M7 7l3 3M9 6l3 3" stroke="#a9a9bd"/></svg>

    <aside class="float" aria-label="3DCS analysis">
      <div class="floathead"><span>3</span><button aria-label="Close toolbar">x</button></div>
      <div class="vgrp tall">
        <button class="drop" aria-label="Simulation"><svg><use href="#bell"/></svg></button>
        <button aria-label="Contributors"><svg><use href="#redarrow"/></svg></button>
        <button class="drop" aria-label="Results"><svg><use href="#pic"/></svg></button>
      </div>
    </aside>
  </section>

  <div class="side right" role="toolbar" aria-label="Workbench">
    <div class="vgrp"><button aria-label="Workbench"><svg><use href="#ring"/></svg></button></div>
    <div class="vgrp"><button class="drop" aria-label="Select"><svg><use href="#arrow"/></svg></button></div>
    <div class="vgrp"><button class="drop" aria-label="Select mechanism"><svg><use href="#gear-arrow"/></svg></button></div>
    <div class="vgrp">
      <button class="drop" aria-label="Refresh"><svg><use href="#cycle"/></svg></button>
      <button aria-label="Paint"><svg><use href="#brush"/></svg></button>
    </div>
    <div class="vgrp">
      <button aria-label="Point set"><svg><use href="#dots-sq"/></svg></button>
      <button aria-label="Plane normal"><svg><use href="#plane-up"/></svg></button>
      <button class="drop" aria-label="Create point"><svg><use href="#spark-line"/></svg></button>
    </div>
    <div class="vgrp tall rule">
      <button class="drop" aria-label="Move"><svg><use href="#swap"/></svg></button>
      <button class="drop" aria-label="Tolerance"><svg><use href="#balloon"/></svg></button>
      <button aria-label="Pattern"><svg><use href="#network"/></svg></button>
      <button class="drop" aria-label="Measure"><svg><use href="#measure"/></svg></button>
      <button class="drop" aria-label="Schedule"><svg><use href="#mol-clock"/></svg></button>
      <button class="drop" aria-label="GD&amp;T"><svg><use href="#toler"/></svg></button>
    </div>
    <div class="vgrp">
      <button aria-label="Compliant"><svg><use href="#robots"/></svg></button>
      <button aria-label="Nominal build"><svg><use href="#person"/></svg></button>
      <button class="drop" aria-label="Deviate"><svg><use href="#rgb-cube"/></svg></button>
      <button aria-label="Separate"><svg><use href="#blk-cube"/></svg></button>
      <button class="drop" aria-label="Animate"><svg><use href="#film"/></svg></button>
      <button class="drop" aria-label="Layers"><svg><use href="#sheets"/></svg></button>
    </div>
  </div>
</main>

<div class="bar bottom" role="toolbar" aria-label="Standard">
  <div class="grp">
    <button aria-label="New"><svg><use href="#new"/></svg></button>
    <button aria-label="Open"><svg><use href="#open"/></svg></button>
    <button aria-label="Save"><svg><use href="#save"/></svg></button>
    <button aria-label="Print"><svg><use href="#print"/></svg></button>
    <button aria-label="Cut"><svg><use href="#cut"/></svg></button>
    <button aria-label="Copy"><svg><use href="#copy"/></svg></button>
    <button aria-label="Paste"><svg><use href="#paste"/></svg></button>
    <button class="drop" aria-label="Undo"><svg><use href="#undo"/></svg></button>
    <button class="drop" aria-label="Redo"><svg><use href="#redo"/></svg></button>
    <button aria-label="What's this"><svg><use href="#whatsthis"/></svg></button>
  </div>
  <div class="grp">
    <button class="fx" aria-label="Formula">f(x)</button>
    <button aria-label="Comment"><svg><use href="#bubble"/></svg></button>
    <button aria-label="Check analysis"><svg><use href="#ghost"/></svg></button>
    <button class="drop" aria-label="Design table"><svg><use href="#table"/></svg></button>
    <button class="drop" aria-label="Lock"><svg><use href="#lock"/></svg></button>
    <button aria-label="Equivalent dimensions"><svg><use href="#tree"/></svg></button>
  </div>
  <div class="grp near">
    <button aria-label="Fly mode"><svg><use href="#fly"/></svg></button>
    <button aria-label="Fit all in"><svg><use href="#fit"/></svg></button>
    <button aria-label="Pan"><svg><use href="#pan"/></svg></button>
    <button aria-label="Rotate"><svg><use href="#rotate"/></svg></button>
    <button aria-label="Zoom in"><svg><use href="#zin"/></svg></button>
    <button aria-label="Zoom out"><svg><use href="#zout"/></svg></button>
    <button aria-label="Normal view"><svg><use href="#normal"/></svg></button>
    <button aria-label="Multi-view"><svg><use href="#views"/></svg></button>
    <button class="drop" aria-label="Isometric view"><svg><use href="#iso"/></svg></button>
    <button class="drop" aria-label="Render style"><svg><use href="#cyl"/></svg></button>
    <button aria-label="Hide or show"><svg><use href="#hide"/></svg></button>
    <button aria-label="Swap visible space"><svg><use href="#swapvis"/></svg></button>
  </div>
  <div class="grp"><button aria-label="Capture"><svg><use href="#camera"/></svg></button></div>
  <div class="grp"><button aria-label="Update"><svg><use href="#cycle2"/></svg></button></div>
  <div class="grp line">
    <button aria-label="Simulate robot"><svg><use href="#robot"/></svg></button>
    <button aria-label="Replay"><svg><use href="#robotfilm"/></svg></button>
  </div>
  <div class="grp line">
    <button aria-label="Mechanism"><svg><use href="#arm"/></svg></button>
    <button class="drop" aria-label="Fixed part"><svg><use href="#anchor"/></svg></button>
    <button class="drop" aria-label="Joint"><svg><use href="#pot"/></svg></button>
    <button aria-label="Axis system"><svg><use href="#axes"/></svg></button>
  </div>
  <div class="grp wide">
    <button class="drop" aria-label="Grid"><svg><use href="#grid"/></svg></button>
    <button class="drop" aria-label="Clamp"><svg><use href="#magnet"/></svg></button>
    <button class="drop" aria-label="Load force"><svg><use href="#down"/></svg></button>
    <button class="drop" aria-label="Deform"><svg><use href="#wave"/></svg></button>
  </div>
  <div class="grp far">
    <button aria-label="Compute"><svg><use href="#bolt"/></svg></button>
    <button aria-label="Colour map"><svg><use href="#map"/></svg></button>
    <button aria-label="Map warnings"><svg><use href="#mapwarn"/></svg></button>
    <button aria-label="Map scale"><svg><use href="#scale"/></svg></button>
    <button aria-label="Chart"><svg><use href="#chart"/></svg></button>
    <button class="drop" aria-label="Save map"><svg><use href="#mapsave"/></svg></button>
  </div>
  <div class="logo">
    <svg viewBox="0 0 18 17" aria-hidden="true"><path d="M6 1c3-1 6 0 6 1S9 5 8 6" fill="none" stroke="#d82c40" stroke-width="1.300"/><path d="M3 8c8-1 5 6-1 7l3-6" fill="none" stroke="#1c2c78" stroke-width="1.400"/><path d="M16 6c-4 0-5 2-3 4s0 5-4 4" fill="none" stroke="#e88434" stroke-width="1.400"/></svg>
    <span>CATIA</span>
  </div>
</div>

<footer class="status">
  <span class="msg">DCSStorage.53394/DCSStorage.53349/DCSStorage.53342 selected</span>
  <input type="text" aria-label="Power input">
  <button aria-label="Dialog"><svg viewBox="0 0 12 9"><path d="M1.500 1.500h6v4h-6zM9.500 1v6.500H4"/></svg></button>
  <button aria-label="Information"><svg viewBox="0 0 12 9"><path d="M2.500 1.500h7v5h-7zM6 3v2.500M0 8.500h12"/></svg></button>
</footer>
</body>
</html>
```

FILE: styles.css
```css
* { box-sizing: border-box; }
body {
  margin: 0;
  height: 100vh;
  display: flex;
  flex-direction: column;
  overflow: hidden;
  background: #cfcfe4;
  color: #26262e;
  font: 8px/12px Roboto, "Noto Sans", sans-serif;
}
button { border: 0; padding: 0; background: none; color: inherit; font: inherit; }
.defs { position: absolute; width: 0; height: 0; }

.titlebar { display: flex; align-items: center; height: 14px; background: #fff; }
.appicon { width: 9px; height: 9px; margin: 0 5px 0 2px; }
.title { flex: 1; margin: 0; font-size: 8px; font-weight: 400; }
.winctl { display: flex; margin-right: 3px; }
.winctl button { width: 30px; height: 12px; display: grid; place-items: center; }
.winctl svg, .mdi svg { width: 8px; height: 8px; fill: none; stroke: #333; }

.menubar { display: flex; height: 13px; background: #d3d3e8; }
.menuicon { width: 13px; height: 13px; }
.menu { font-family: "Open Sans", sans-serif; line-height: 13px; padding: 0 7px; }
.menu.start { padding: 0 11px 0 5px; background: #fde5bd; margin-right: -3px; }
.menu.tight { padding-right: 2px; }
.mdi { display: flex; margin-left: auto; }
.mdi button { width: 13px; display: grid; place-items: center; }

.bar { display: flex; align-items: center; background: linear-gradient(#f2f2fa, #d6d6e8 25%, #cbcbdf 80%, #a6a6bc); padding-left: 5px; }
.bar.top { height: 26px; border-bottom: 2px solid #8d8da2; }
.bar.bottom { height: 26px; background: linear-gradient(#fff, #e0e0ee 20%, #cdcde1 80%, #a8a8bd); }
.grp { display: flex; align-items: center; padding-left: 5px; margin-left: 6px; position: relative; }
.grp:first-child { margin-left: 0; }
.top .grp + .grp { margin-left: 7px; }
.grp::before { content: ""; position: absolute; left: 0; top: 0; width: 1px; height: 11px; background: #fff; }
.grp button { position: relative; width: 19px; height: 19px; display: grid; place-items: center; }
.grp.wide button { width: 20px; }
.grp.near { margin-left: 4px; }
.grp.far { margin-left: 9px; }
.grp.line { margin-left: 2px; padding-left: 4px; }
.grp.line::before { height: 22px; }
.grp svg, .vgrp svg { width: 14px; height: 14px; display: block; }
.drop::after { content: ""; position: absolute; right: -1px; bottom: 0; border: 2px solid transparent; border-top: 3px solid #111; border-bottom: 0; }
.grp button.fx { font: italic 700 11px/19px "Liberation Serif", serif; }

.work { flex: 1; display: flex; min-height: 0; }
.side { flex: none; width: 25px; padding-top: 4px; background: linear-gradient(90deg, #f6f6fc, #d2d2e6 30%, #cdcde1 80%, #b0b0c6); }
.side.right { width: 26px; padding-top: 3px; }
.vgrp { position: relative; display: flex; flex-direction: column; align-items: center; padding-top: 6px; margin-bottom: 6px; }
.vgrp::before { content: ""; position: absolute; left: 3px; top: 0; width: 11px; height: 1px; background: #fff; }
.vgrp button { position: relative; width: 19px; height: 19px; display: grid; place-items: center; }
.vgrp.tall button { height: 20px; }
.vgrp.tall button.short { height: 19px; }
.vgrp.rule { margin-top: -4px; padding-top: 4px; }
.vgrp.rule::before { left: 0; width: 100%; }

.view { position: relative; flex: 1; min-width: 0; background: linear-gradient(#333363, #3d3d6d 32%, #454577 64%, #73739c 82%, #a8a8c2); }
.scene { position: absolute; inset: 0; width: 100%; height: 100%; }
.pin { font: 10px "Liberation Sans", sans-serif; fill: #1a1410; }
.callout { font: 11px Roboto, sans-serif; fill: #0c2430; }
.axis { font: 8px "Noto Sans", sans-serif; fill: #d4cf38; }
.axis.white { fill: #eeeef6; }

.tree { position: relative; width: 200px; padding-top: 5px; color: #e9e9f4; font: 8px/17px Roboto, "Noto Sans", sans-serif; }
.tree ul { list-style: none; margin: 0; padding: 0; }
.tree .lines { position: absolute; left: 0; top: 0; width: 190px; height: 295px; fill: none; stroke: #d5d5e4; stroke-width: 1; }
.tree .knob { fill: #bcbcc8; stroke: #50505c; }
.tree .mark { stroke: #0c0c14; stroke-width: 1; }
.row { position: relative; display: flex; align-items: center; height: 17px; white-space: nowrap; }
.row svg { flex: none; width: 14px; height: 14px; margin-right: 2px; }
.row b { font-weight: 400; line-height: 10px; background: #fb830d; padding: 0 1px; margin-left: -1px; }
.row b.blue { background: #1b63cf; border-top: 1px solid #cfe0ff; }
.root { padding-left: 1px; }
.l1 { padding-left: 13px; }
.apps { padding-left: 13px; }
.dcs { padding-left: 25px; }
.model { padding-left: 38px; }
.l4 { padding-left: 50px; }
.l5 { padding-left: 62px; }
.gap { margin-top: 1px; }

.hand { position: absolute; left: 147px; top: 225px; width: 16px; height: 14px; }

.float { position: absolute; right: 8px; top: 321px; width: 24px; background: #d2d2e5; box-shadow: 0 1px 4px #2228; }
.floathead { display: flex; align-items: center; justify-content: flex-end; gap: 3px; height: 18px; margin-bottom: 4px; padding-right: 1px; background: #fff; }
.floathead button { width: 12px; height: 12px; background: #c04a50; color: #fff; line-height: 10px; font-weight: 700; }
.float .vgrp { margin: 0; padding-top: 4px; }

.logo { margin-left: auto; margin-right: 6px; display: flex; flex-direction: column; align-items: center; color: #1c2860; font: italic 700 7px/7px "Liberation Sans", sans-serif; }
.logo svg { width: 18px; height: 17px; }

.status { display: flex; align-items: center; gap: 2px; height: 16px; padding: 0 2px; border-bottom: 1px solid #35353f; background: #cfcfe4; }
.msg { flex: 1; color: #333; }
.status input { width: 200px; height: 13px; border: 1px solid #9a9aae; background: #fff; padding: 0 2px; font: inherit; }
.status button { width: 21px; height: 13px; display: grid; place-items: center; border: 1px solid; border-color: #ececf6 #9696aa #9696aa #ececf6; }
.status button svg { width: 12px; height: 9px; fill: none; stroke: #9999ad; }
```
